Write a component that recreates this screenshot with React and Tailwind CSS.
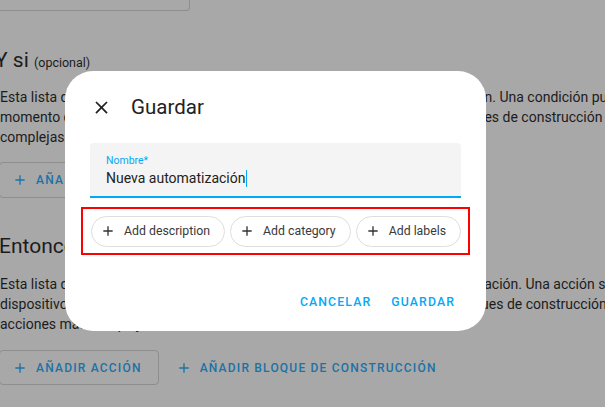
import React from 'react';

function PlusIcon({ className }) {
  return (
    <svg viewBox="0 0 24 24" className={className} fill="currentColor">
      <path d="M19,13H13V19H11V13H5V11H11V5H13V11H19V13Z" />
    </svg>
  );
}

function CloseIcon({ className }) {
  return (
    <svg viewBox="0 0 24 24" className={className} fill="currentColor">
      <path d="M19,6.41L17.59,5L12,10.59L6.41,5L5,6.41L10.59,12L5,17.59L6.41,19L12,13.41L17.59,19L19,17.59L13.41,12L19,6.41Z" />
    </svg>
  );
}

function Chip({ label }) {
  return (
    <button className="flex-none whitespace-nowrap h-[31px] flex items-center rounded-full border border-[#dedede] pl-[8px] pr-[14px] text-[12.3px] text-[#3a3a3a]">
      <PlusIcon className="w-[16px] h-[16px] text-[#333]" />
      <span className="ml-[8px]">{label}</span>
    </button>
  );
}

export default function App() {
  return (
    <div
      className="relative w-[605px] h-[407px] overflow-hidden bg-[#a8a8a8] text-[#1c1c1c]"
      style={{ fontFamily: 'Roboto, "Liberation Sans", sans-serif' }}
    >
      {/* page behind the scrim */}
      <div className="ml-[-1px] whitespace-nowrap">
        <div className="w-[191px] h-[11px] border-r border-b border-[#8e8e8e] rounded-br-[4px]" />

        <h2 className="mt-[36px] ml-[-4px] text-[21px] leading-[26px]">
          Y si <span className="text-[12.5px]">(opcional)</span>
        </h2>
        <div className="mt-[11px] text-[14px] leading-[20px] pl-[1px]">
          <p>Esta lista de condiciones deben cumplirse para que se active la automatización. Una condición puede cumplirse o no en cualquier</p>
          <p>momento dado, por ejemplo, si una luz está encendida o no. Puede usar bloques de construcción para crear condiciones más</p>
          <p>complejas.</p>
        </div>
        <div className="mt-[15px] flex items-center h-[36px]">
          <button className="h-[36px] flex items-center gap-[8px] border border-[#8e8e8e] rounded-[4px] pl-[12px] pr-[16px] text-[#1b72a6] text-[12px] font-medium tracking-[0.1em]">
            <PlusIcon className="w-[16px] h-[16px]" />
            AÑADIR CONDICIÓN
          </button>
        </div>

        <h2 className="mt-[35px] text-[21px] leading-[26px]">Entonces haz</h2>
        <div className="mt-[15px] text-[14px] leading-[20px] pl-[1px]">
          <p>Esta lista de acciones se realizará en su orden cuando se dispare la automatización. Una acción suele controlar una de tus áreas,</p>
          <p>dispositivos o entidades, por ejemplo: encender unas luces. Puedes usar bloques de construcción para crear secuencias de</p>
          <p>acciones más complejas.</p>
        </div>
        <div className="mt-[16px] flex items-center gap-[12px]">
          <button className="h-[35px] flex items-center gap-[8px] border border-[#8e8e8e] rounded-[4px] pl-[12px] pr-[16px] text-[#1b72a6] text-[12px] font-medium tracking-[0.1em]">
            <PlusIcon className="w-[16px] h-[16px]" />
            AÑADIR ACCIÓN
          </button>
          <button className="h-[35px] flex items-center gap-[8px] px-[5px] text-[#1b72a6] text-[12px] font-medium tracking-[0.1em]">
            <PlusIcon className="w-[16px] h-[16px]" />
            AÑADIR BLOQUE DE CONSTRUCCIÓN
          </button>
        </div>
      </div>

      {/* dialog */}
      <div className="absolute left-[65px] top-[71px] w-[421px] h-[260px] bg-white rounded-[28px] flex flex-col">
        <div className="mt-[24px] h-[24px] flex items-center pl-[26px]">
          <CloseIcon className="w-[21px] h-[21px] text-[#222]" />
          <span className="ml-[19px] text-[20.5px] text-[#222]">Guardar</span>
        </div>

        <div className="mt-[24px] mx-[25px] h-[55px] bg-[#f4f4f4] rounded-t-[4px] border-b-2 border-[#03a9f4] pl-[16px] pt-[11px]">
          <div className="text-[10.5px] leading-[14px] text-[#03a9f4]">Nombre*</div>
          <div className="text-[14px] leading-[20px] text-[#222] flex items-center">
            Nueva automatización
            <span className="ml-[1px] w-[1px] h-[17px] bg-[#03a9f4]" />
          </div>
        </div>

        <div className="mt-[9px] mx-[16px] h-[48px] border-2 border-[#ff0000] flex items-center gap-[5px] pl-[8px]">
          <Chip label="Add description" />
          <Chip label="Add category" />
          <Chip label="Add labels" />
        </div>

        <div className="mt-auto mb-[19px] flex justify-end gap-[4px] pr-[23px]">
          <button className="h-[20px] px-[8px] text-[12.3px] font-medium tracking-[0.09em] text-[#03a9f4]">CANCELAR</button>
          <button className="h-[20px] px-[8px] text-[12.3px] font-medium tracking-[0.09em] text-[#03a9f4]">GUARDAR</button>
        </div>
      </div>
    </div>
  );
}
